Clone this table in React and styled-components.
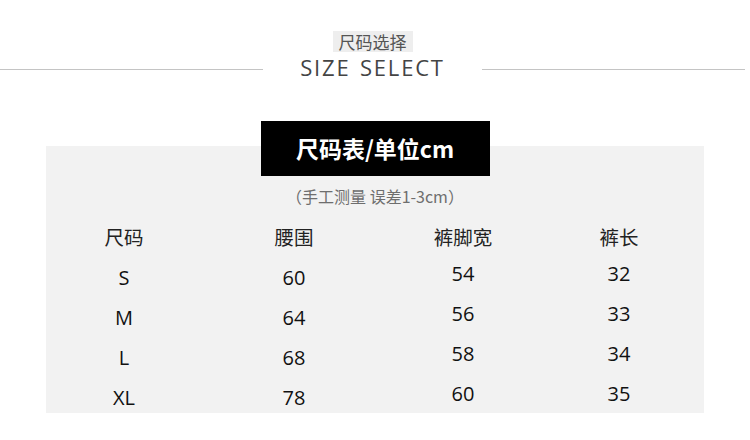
import React from "react";
import styled, { createGlobalStyle } from "styled-components";

const Global = createGlobalStyle`
  html, body { margin: 0; padding: 0; background: #ffffff; }
  body { font-family: "Noto Sans CJK SC", "Noto Sans", sans-serif; }
`;

const Page = styled.div`
  width: 750px;
  height: 440px;
  background: #fff;
  overflow: hidden;
`;

const Heading = styled.div`
  display: flex;
  align-items: flex-start;
  padding-top: 31px;
`;

const Rule = styled.div`
  flex: 1;
  height: 1px;
  margin-top: 38px;
  background: #c4c4c4;
  margin-right: ${(p) => p.$gapRight || 0}px;
`;

const HeadingText = styled.div`
  width: 219px;
  display: flex;
  flex-direction: column;
  align-items: center;
`;

const CnTag = styled.span`
  display: inline-block;
  height: 21px;
  line-height: 21px;
  padding: 0 6px;
  background: #eeeeee;
  color: #555;
  font-size: 17px;
`;

const EnTitle = styled.div`
  margin-top: 1px;
  font-family: "Open Sans", "Noto Sans", sans-serif;
  font-size: 22px;
  line-height: 28px;
  letter-spacing: 1.8px;
  color: #444;
  word-spacing: 2px;
`;

const Panel = styled.div`
  margin: 65px 0 0 46px;
  width: 658px;
  height: 267px;
  background: #f2f2f2;
  display: flex;
  flex-direction: column;
  align-items: center;
`;

const TitleBox = styled.div`
  margin-top: -25px;
  width: 229px;
  height: 55px;
  background: #000;
  color: #fff;
  font-size: 23px;
  font-weight: 700;
  line-height: 55px;
  text-align: center;
`;

const Note = styled.div`
  margin-top: 8px;
  font-size: 16px;
  line-height: 24px;
  color: #6e6e6e;
`;

const Table = styled.div`
  align-self: stretch;
  margin-top: 13px;
  display: grid;
  grid-template-columns: 156px 184px 154px 158px;
`;

const Cell = styled.div`
  height: ${(p) => (p.$head ? 37 : 40)}px;
  box-sizing: border-box;
  padding-top: ${(p) => (p.$lift ? 0 : 4)}px;
  text-align: center;
  font-size: ${(p) => (p.$head ? 19.5 : 20)}px;
  line-height: 32px;
  color: ${(p) => (p.$head ? "#222" : "#111")};
  font-family: ${(p) =>
    p.$head ? `"Noto Sans CJK SC", sans-serif` : `"Open Sans", "Noto Sans CJK SC", sans-serif`};
`;

const head = ["尺码", "腰围", "裤脚宽", "裤长"];
const rows = [
  ["S", "60", "54", "32"],
  ["M", "64", "56", "33"],
  ["L", "68", "58", "34"],
  ["XL", "78", "60", "35"],
];

export default function App() {
  return (
    <Page>
      <Global />
      <Heading>
        <Rule />
        <HeadingText>
          <CnTag>尺码选择</CnTag>
          <EnTitle>SIZE SELECT</EnTitle>
        </HeadingText>
        <Rule $gapRight={5} />
      </Heading>
      <Panel>
        <TitleBox>尺码表/单位cm</TitleBox>
        <Note>（手工测量 误差1-3cm）</Note>
        <Table>
          {head.map((h) => (
            <Cell key={h} $head $lift>
              {h}
            </Cell>
          ))}
          {rows.map((r) =>
            r.map((v, i) => (
              <Cell key={r[0] + i} $lift={i >= 2}>
                {v}
              </Cell>
            ))
          )}
        </Table>
      </Panel>
    </Page>
  );
}
